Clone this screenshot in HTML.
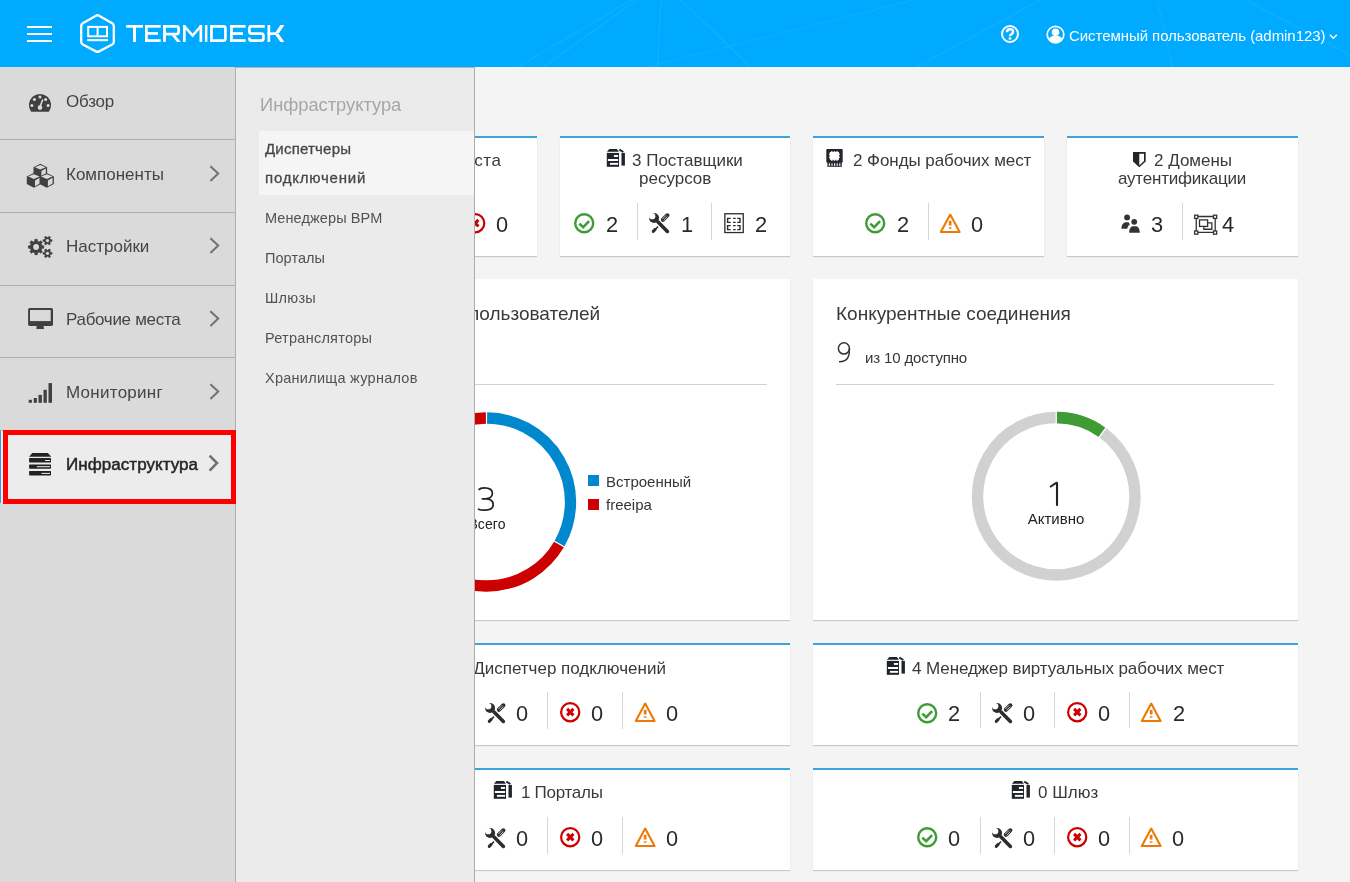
<!DOCTYPE html>
<html><head><meta charset="utf-8"><title>Termidesk</title>
<style>
html,body{margin:0;padding:0;}
body{width:1350px;height:882px;position:relative;overflow:hidden;background:#f4f4f4;font-family:"Liberation Sans", sans-serif;}
.t{position:absolute;white-space:nowrap;will-change:transform;}
.r{position:absolute;}
.s{position:absolute;overflow:visible;}
</style></head><body>
<div class="r" style="left:307px;top:136px;width:230px;height:2px;background:#39a5dc;"></div><div class="r" style="left:307px;top:138px;width:230px;height:118px;background:#fff;box-shadow:0 1px 1px rgba(3,3,3,0.18);"></div><div class="r" style="left:560px;top:136px;width:230px;height:2px;background:#39a5dc;"></div><div class="r" style="left:560px;top:138px;width:230px;height:118px;background:#fff;box-shadow:0 1px 1px rgba(3,3,3,0.18);"></div><div class="r" style="left:813px;top:136px;width:231px;height:2px;background:#39a5dc;"></div><div class="r" style="left:813px;top:138px;width:231px;height:118px;background:#fff;box-shadow:0 1px 1px rgba(3,3,3,0.18);"></div><div class="r" style="left:1067px;top:136px;width:231px;height:2px;background:#39a5dc;"></div><div class="r" style="left:1067px;top:138px;width:231px;height:118px;background:#fff;box-shadow:0 1px 1px rgba(3,3,3,0.18);"></div><div class="t" style="left:375px;top:151.61px;font-size:17px;line-height:17px;color:#3a3a3a;font-weight:400;letter-spacing:0.65px;">Рабочие места</div><svg class="s" style="left:465.2px;top:212.9px;" width="21" height="21" viewBox="0 0 21 21"><circle cx="10.2" cy="10.2" r="9.1" fill="none" stroke="#cc0000" stroke-width="2.2"/><path d="M7.1 6.9 L13.4 13.4 M13.4 6.9 L7.1 13.4" stroke="#cc0000" stroke-width="3"/></svg><div class="t" style="left:496.2px;top:213.54px;font-size:21.8px;line-height:21.8px;color:#292929;font-weight:400;">0</div><svg class="s" style="left:603px;top:146px;" width="25" height="24" viewBox="0 0 25 24"><path d="M6.3 2.9 H13.9 L15.9 5.85 H3.9 Z" fill="#1f232a"/><rect x="3.8" y="6.9" width="12.2" height="13.9" fill="#1f232a"/><rect x="10.9" y="9" width="4.2" height="1.9" fill="#fff"/><rect x="4.9" y="13" width="10.2" height="2" fill="#fff"/><rect x="6.9" y="16.9" width="8.2" height="1.9" fill="#fff"/><rect x="18.5" y="6.9" width="3.4" height="12.7" fill="#1f232a"/><path d="M16.3 3.6 L20.4 6" stroke="#1f232a" stroke-width="1.9"/></svg><div class="t" style="left:632.3px;top:151.81px;font-size:17px;line-height:17px;color:#3a3a3a;font-weight:400;">3 Поставщики</div><div class="t" style="left:639.2px;top:170.11px;font-size:17px;line-height:17px;color:#3a3a3a;font-weight:400;">ресурсов</div><svg class="s" style="left:574.2px;top:212.9px;" width="21" height="21" viewBox="0 0 21 21"><circle cx="10.2" cy="10.2" r="9.0" fill="none" stroke="#3f9c35" stroke-width="2.4"/><path d="M5.3 10.6 L9.2 14.2 L15.1 8.2" fill="none" stroke="#3f9c35" stroke-width="2.6"/></svg><div class="t" style="left:605.5px;top:213.54px;font-size:21.8px;line-height:21.8px;color:#292929;font-weight:400;">2</div><div class="r" style="left:637px;top:203px;width:1px;height:37px;background:#d6d6d6;"></div><svg class="s" style="left:646px;top:210px;" width="26" height="26" viewBox="0 0 26 26"><path d="M11.8 11.8 L21.4 21.4" stroke="#2d2d2d" stroke-width="3.6" stroke-linecap="round"/><circle cx="8.05" cy="8" r="5" fill="#2d2d2d"/><circle cx="6.2" cy="6.2" r="3.15" fill="#fff"/><path d="M16.9 9.8 L21.4 5.3" stroke="#2d2d2d" stroke-width="4.1" stroke-linecap="round"/><path d="M16.3 9.1 L20.1 5.3 M17.6 10.4 L21.4 6.6" stroke="#fff" stroke-width="0.7"/><path d="M12 16.6 L9.4 19.2" stroke="#2d2d2d" stroke-width="1.5"/><path d="M9.2 19.4 L7.2 21.4" stroke="#2d2d2d" stroke-width="2.9" stroke-linecap="round"/></svg><div class="t" style="left:681px;top:213.54px;font-size:21.8px;line-height:21.8px;color:#292929;font-weight:400;">1</div><div class="r" style="left:711px;top:203px;width:1px;height:37px;background:#d6d6d6;"></div><svg class="s" style="left:721px;top:210px;" width="26" height="26" viewBox="0 0 26 26"><rect x="3.85" y="3.75" width="18.4" height="18.8" fill="none" stroke="#2d2d2d" stroke-width="1.3"/><path d="M9.7 8.4 H6.6 V12.4 H9.7 M12.1 8.4 H14.7 M12.1 12.4 H14.7 M16.2 8.4 H19 V12.4 H16.2" fill="none" stroke="#2d2d2d" stroke-width="1.4"/><path d="M9.7 15.6 H6.6 V19.6 H9.7 M12.1 15.6 H14.7 M12.1 19.6 H14.7 M16.2 15.6 H19 V19.6 H16.2" fill="none" stroke="#2d2d2d" stroke-width="1.4"/></svg><div class="t" style="left:754.5px;top:213.54px;font-size:21.8px;line-height:21.8px;color:#292929;font-weight:400;">2</div><svg class="s" style="left:823px;top:146px;" width="24" height="24" viewBox="0 0 24 24"><rect x="3.3" y="2.9" width="16.4" height="13.8" rx="1" fill="#22262d"/><rect x="4.4" y="16.2" width="14.4" height="4.6" fill="#22262d"/><rect x="5.8" y="17.4" width="1.2" height="2.4" fill="#fff"/><rect x="8.4" y="17.4" width="1.2" height="2.4" fill="#fff"/><rect x="11.0" y="17.4" width="1.2" height="2.4" fill="#fff"/><rect x="13.6" y="17.4" width="1.2" height="2.4" fill="#fff"/><rect x="16.2" y="17.4" width="1.2" height="2.4" fill="#fff"/><path d="M6.8 6 H8 V5.3 H9.6 V6 H10.6 V5.3 H12.2 V6 H13.2 V5.3 H14.8 V6 H16 V7.6 H16.7 V9.2 H16 V10.4 H16.7 V12 H16 V13.8 H14.8 V14.8 H13.2 V13.8 H12.2 V14.8 H10.6 V13.8 H9.6 V14.8 H8 V13.8 H6.8 V12 H6.1 V10.4 H6.8 V9.2 H6.1 V7.6 H6.8 Z" fill="#fff"/></svg><div class="t" style="left:853.3px;top:151.61px;font-size:17px;line-height:17px;color:#3a3a3a;font-weight:400;letter-spacing:-0.06px;">2 Фонды рабочих мест</div><svg class="s" style="left:865.3px;top:213.2px;" width="21" height="21" viewBox="0 0 21 21"><circle cx="10.2" cy="10.2" r="9.0" fill="none" stroke="#3f9c35" stroke-width="2.4"/><path d="M5.3 10.6 L9.2 14.2 L15.1 8.2" fill="none" stroke="#3f9c35" stroke-width="2.6"/></svg><div class="t" style="left:896.8px;top:213.54px;font-size:21.8px;line-height:21.8px;color:#292929;font-weight:400;">2</div><div class="r" style="left:928px;top:203px;width:1px;height:37px;background:#d6d6d6;"></div><svg class="s" style="left:940px;top:212.5px;" width="21" height="21" viewBox="0 0 21 21"><path d="M10.2 1.6 L19.6 19 L0.8 19 Z" fill="none" stroke="#ec7a08" stroke-width="2.1" stroke-linejoin="round"/><rect x="8.8" y="7.8" width="2.7" height="4.7" fill="#ec7a08"/><rect x="8.8" y="14.3" width="2.7" height="1.4" fill="#ec7a08"/></svg><div class="t" style="left:970.8px;top:213.54px;font-size:21.8px;line-height:21.8px;color:#292929;font-weight:400;">0</div><svg class="s" style="left:1129px;top:149px;" width="21" height="21" viewBox="0 0 21 21"><path d="M4 3.1 H16.7 V12.4 L10.3 18.3 L4 12.4 Z" fill="#22262d"/><path d="M10.3 4.8 H15 V12 L10.3 16.4 Z" fill="#fff"/></svg><div class="t" style="left:1153.8px;top:151.61px;font-size:17px;line-height:17px;color:#3a3a3a;font-weight:400;">2 Домены</div><div class="t" style="left:1118.3px;top:170.11px;font-size:17px;line-height:17px;color:#3a3a3a;font-weight:400;letter-spacing:-0.21px;">аутентификации</div><svg class="s" style="left:1118px;top:211px;" width="25" height="25" viewBox="0 0 25 25"><circle cx="9.1" cy="6.4" r="2.9" fill="#333"/><circle cx="16.2" cy="10.8" r="2.9" fill="#333"/><path d="M3.4 17.7 C3.6 13.5 5.4 11.2 8.2 11.2 H10.6 L11.9 13.2 C10.4 14.3 9.6 15.8 9.2 17.7 Z" fill="#333"/><path d="M11.1 21.8 C11.2 17.6 12.8 15.2 15.2 15.2 H17.6 C20.2 15.2 21.7 17.6 21.8 21.8 Z" fill="#333"/></svg><div class="t" style="left:1150.6px;top:213.54px;font-size:21.8px;line-height:21.8px;color:#292929;font-weight:400;">3</div><div class="r" style="left:1182px;top:203px;width:1px;height:37px;background:#d6d6d6;"></div><svg class="s" style="left:1192px;top:212px;" width="28" height="25" viewBox="0 0 28 25"><path d="M4.25 6.5 V19 M23.2 6.5 V19 M6 4.5 H21.4 M6 20.4 H21.4" stroke="#333" stroke-width="1.3"/><rect x="7.5" y="7.9" width="8.1" height="6.5" fill="none" stroke="#333" stroke-width="1.3"/><path d="M15.6 10.85 H19.85 V17.25 H11.85 V14.4" fill="none" stroke="#333" stroke-width="1.3"/><rect x="2.6" y="3.2" width="3.2" height="3.2" fill="#fff" stroke="#333" stroke-width="1.3"/><rect x="21.5" y="3.2" width="3.2" height="3.2" fill="#fff" stroke="#333" stroke-width="1.3"/><rect x="2.6" y="19.0" width="3.2" height="3.2" fill="#fff" stroke="#333" stroke-width="1.3"/><rect x="21.5" y="19.0" width="3.2" height="3.2" fill="#fff" stroke="#333" stroke-width="1.3"/></svg><div class="t" style="left:1221.8px;top:213.54px;font-size:21.8px;line-height:21.8px;color:#292929;font-weight:400;">4</div><div class="r" style="left:307px;top:279px;width:483px;height:341px;background:#fff;box-shadow:0 1px 1px rgba(3,3,3,0.18);"></div><div class="r" style="left:813px;top:279px;width:485px;height:341px;background:#fff;box-shadow:0 1px 1px rgba(3,3,3,0.18);"></div><div class="t" style="left:372px;top:303.91px;font-size:19px;line-height:19px;color:#3a3a3a;font-weight:400;">Источники пользователей</div><div class="r" style="left:330px;top:384px;width:437px;height:1px;background:#d1d1d1;"></div><div class="t" style="left:836px;top:303.91px;font-size:19px;line-height:19px;color:#3a3a3a;font-weight:400;">Конкурентные соединения</div><svg class="s" style="left:832px;top:338px;" width="26" height="30" viewBox="0 0 26 30"><ellipse cx="11.9" cy="10.4" rx="5.55" ry="5.6" fill="none" stroke="#333" stroke-width="1.5"/><path d="M17.45 10.4 C17.5 13.5 17.4 16.6 16 19.4 C14.5 22.4 11.6 23.7 7 23.8" fill="none" stroke="#333" stroke-width="1.5"/></svg><div class="t" style="left:864.6px;top:349.90px;font-size:15px;line-height:15px;color:#363636;font-weight:400;letter-spacing:-0.15px;">из 10 доступно</div><div class="r" style="left:836px;top:384px;width:438px;height:1px;background:#d1d1d1;"></div><svg class="s" style="left:380px;top:400px;" width="220" height="210" viewBox="0 0 220 210"><path d="M107.09 18.00 A84.0 84.0 0 0 1 179.54 143.49" fill="none" stroke="#0088ce" stroke-width="11.3"/><path d="M178.95 144.51 A84.0 84.0 0 1 1 105.91 18.00" fill="none" stroke="#cc0000" stroke-width="11.3"/></svg><svg class="s" style="left:470px;top:482px;" width="30" height="34" viewBox="0 0 30 34"><path d="M8.6 7.9 C9.9 6.3 11.7 5.9 14.2 5.9 C18.6 5.9 22.4 7.6 22.4 11.3 C22.4 14.6 19.6 16.8 15.4 16.8 H11.7 M15.4 16.8 C20.6 16.8 23.2 19.2 23.2 22.6 C23.2 26.6 19.8 28.2 14.6 28.2 C11.8 28.2 9.6 27.8 7.9 26.9" fill="none" stroke="#222" stroke-width="1.7"/></svg><div class="t" style="left:447.30px;width:80px;text-align:center;top:517.45px;font-size:14px;line-height:14px;color:#222;font-weight:400;letter-spacing:0.1px;">Всего</div><div class="r" style="left:588px;top:475px;width:11px;height:11px;background:#0088ce;"></div><div class="t" style="left:606.2px;top:473.50px;font-size:15px;line-height:15px;color:#363636;font-weight:400;">Встроенный</div><div class="r" style="left:588px;top:499px;width:11px;height:11px;background:#cc0000;"></div><div class="t" style="left:606.2px;top:497.30px;font-size:15px;line-height:15px;color:#363636;font-weight:400;">freeipa</div><svg class="s" style="left:960px;top:400px;" width="200" height="200" viewBox="0 0 200 200"><path d="M96.25 17.55 A78.7 78.7 0 1 1 96.24 17.55" fill="none" stroke="#d1d1d1" stroke-width="11.4"/><path d="M96.80 17.55 A78.7 78.7 0 0 1 142.06 32.26" fill="none" stroke="#3f9c35" stroke-width="11.4"/><path d="M96.25 11 V23 M135.93 41.64 L149.15 23.44" stroke="#fff" stroke-width="1.2"/></svg><svg class="s" style="left:1040px;top:478px;" width="30" height="30" viewBox="0 0 30 30"><path d="M17 4.3 V27.8" stroke="#222" stroke-width="2.1"/><path d="M10 9 L17 4.4" stroke="#222" stroke-width="1.9"/></svg><div class="t" style="left:1006.00px;width:100px;text-align:center;top:510.60px;font-size:15px;line-height:15px;color:#222;font-weight:400;">Активно</div><div class="r" style="left:307px;top:643px;width:483px;height:2px;background:#39a5dc;"></div><div class="r" style="left:307px;top:645px;width:483px;height:100px;background:#fff;box-shadow:0 1px 1px rgba(3,3,3,0.18);"></div><div class="r" style="left:813px;top:643px;width:485px;height:2px;background:#39a5dc;"></div><div class="r" style="left:813px;top:645px;width:485px;height:100px;background:#fff;box-shadow:0 1px 1px rgba(3,3,3,0.18);"></div><svg class="s" style="left:430px;top:654.2px;" width="25" height="24" viewBox="0 0 25 24"><path d="M6.3 2.9 H13.9 L15.9 5.85 H3.9 Z" fill="#1f232a"/><rect x="3.8" y="6.9" width="12.2" height="13.9" fill="#1f232a"/><rect x="10.9" y="9" width="4.2" height="1.9" fill="#fff"/><rect x="4.9" y="13" width="10.2" height="2" fill="#fff"/><rect x="6.9" y="16.9" width="8.2" height="1.9" fill="#fff"/><rect x="18.5" y="6.9" width="3.4" height="12.7" fill="#1f232a"/><path d="M16.3 3.6 L20.4 6" stroke="#1f232a" stroke-width="1.9"/></svg><div class="t" style="left:459px;top:659.61px;font-size:17px;line-height:17px;color:#3a3a3a;font-weight:400;">1 Диспетчер подключений</div><svg class="s" style="left:411px;top:702.3px;" width="21" height="21" viewBox="0 0 21 21"><circle cx="10.2" cy="10.2" r="9.0" fill="none" stroke="#3f9c35" stroke-width="2.4"/><path d="M5.3 10.6 L9.2 14.2 L15.1 8.2" fill="none" stroke="#3f9c35" stroke-width="2.6"/></svg><div class="t" style="left:442px;top:703.04px;font-size:21.8px;line-height:21.8px;color:#292929;font-weight:400;">0</div><div class="r" style="left:473px;top:692px;width:1px;height:37px;background:#d6d6d6;"></div><svg class="s" style="left:482px;top:699.5px;" width="26" height="26" viewBox="0 0 26 26"><path d="M11.8 11.8 L21.4 21.4" stroke="#2d2d2d" stroke-width="3.6" stroke-linecap="round"/><circle cx="8.05" cy="8" r="5" fill="#2d2d2d"/><circle cx="6.2" cy="6.2" r="3.15" fill="#fff"/><path d="M16.9 9.8 L21.4 5.3" stroke="#2d2d2d" stroke-width="4.1" stroke-linecap="round"/><path d="M16.3 9.1 L20.1 5.3 M17.6 10.4 L21.4 6.6" stroke="#fff" stroke-width="0.7"/><path d="M12 16.6 L9.4 19.2" stroke="#2d2d2d" stroke-width="1.5"/><path d="M9.2 19.4 L7.2 21.4" stroke="#2d2d2d" stroke-width="2.9" stroke-linecap="round"/></svg><div class="t" style="left:515.8px;top:703.04px;font-size:21.8px;line-height:21.8px;color:#292929;font-weight:400;">0</div><div class="r" style="left:547px;top:692px;width:1px;height:37px;background:#d6d6d6;"></div><svg class="s" style="left:559.5px;top:702px;" width="21" height="21" viewBox="0 0 21 21"><circle cx="10.2" cy="10.2" r="9.1" fill="none" stroke="#cc0000" stroke-width="2.2"/><path d="M7.1 6.9 L13.4 13.4 M13.4 6.9 L7.1 13.4" stroke="#cc0000" stroke-width="3"/></svg><div class="t" style="left:590.7px;top:703.04px;font-size:21.8px;line-height:21.8px;color:#292929;font-weight:400;">0</div><div class="r" style="left:622px;top:692px;width:1px;height:37px;background:#d6d6d6;"></div><svg class="s" style="left:634.5px;top:701.5px;" width="21" height="21" viewBox="0 0 21 21"><path d="M10.2 1.6 L19.6 19 L0.8 19 Z" fill="none" stroke="#ec7a08" stroke-width="2.1" stroke-linejoin="round"/><rect x="8.8" y="7.8" width="2.7" height="4.7" fill="#ec7a08"/><rect x="8.8" y="14.3" width="2.7" height="1.4" fill="#ec7a08"/></svg><div class="t" style="left:665.7px;top:703.04px;font-size:21.8px;line-height:21.8px;color:#292929;font-weight:400;">0</div><svg class="s" style="left:883.1px;top:654.2px;" width="25" height="24" viewBox="0 0 25 24"><path d="M6.3 2.9 H13.9 L15.9 5.85 H3.9 Z" fill="#1f232a"/><rect x="3.8" y="6.9" width="12.2" height="13.9" fill="#1f232a"/><rect x="10.9" y="9" width="4.2" height="1.9" fill="#fff"/><rect x="4.9" y="13" width="10.2" height="2" fill="#fff"/><rect x="6.9" y="16.9" width="8.2" height="1.9" fill="#fff"/><rect x="18.5" y="6.9" width="3.4" height="12.7" fill="#1f232a"/><path d="M16.3 3.6 L20.4 6" stroke="#1f232a" stroke-width="1.9"/></svg><div class="t" style="left:911.8px;top:659.91px;font-size:17px;line-height:17px;color:#3a3a3a;font-weight:400;letter-spacing:-0.08px;">4 Менеджер виртуальных рабочих мест</div><svg class="s" style="left:917.4px;top:702.5px;" width="21" height="21" viewBox="0 0 21 21"><circle cx="10.2" cy="10.2" r="9.0" fill="none" stroke="#3f9c35" stroke-width="2.4"/><path d="M5.3 10.6 L9.2 14.2 L15.1 8.2" fill="none" stroke="#3f9c35" stroke-width="2.6"/></svg><div class="t" style="left:947.8px;top:703.04px;font-size:21.8px;line-height:21.8px;color:#292929;font-weight:400;">2</div><div class="r" style="left:980px;top:692px;width:1px;height:36px;background:#d6d6d6;"></div><svg class="s" style="left:989px;top:699.5px;" width="26" height="26" viewBox="0 0 26 26"><path d="M11.8 11.8 L21.4 21.4" stroke="#2d2d2d" stroke-width="3.6" stroke-linecap="round"/><circle cx="8.05" cy="8" r="5" fill="#2d2d2d"/><circle cx="6.2" cy="6.2" r="3.15" fill="#fff"/><path d="M16.9 9.8 L21.4 5.3" stroke="#2d2d2d" stroke-width="4.1" stroke-linecap="round"/><path d="M16.3 9.1 L20.1 5.3 M17.6 10.4 L21.4 6.6" stroke="#fff" stroke-width="0.7"/><path d="M12 16.6 L9.4 19.2" stroke="#2d2d2d" stroke-width="1.5"/><path d="M9.2 19.4 L7.2 21.4" stroke="#2d2d2d" stroke-width="2.9" stroke-linecap="round"/></svg><div class="t" style="left:1023px;top:703.04px;font-size:21.8px;line-height:21.8px;color:#292929;font-weight:400;">0</div><div class="r" style="left:1054px;top:692px;width:1px;height:36px;background:#d6d6d6;"></div><svg class="s" style="left:1066.5px;top:702px;" width="21" height="21" viewBox="0 0 21 21"><circle cx="10.2" cy="10.2" r="9.1" fill="none" stroke="#cc0000" stroke-width="2.2"/><path d="M7.1 6.9 L13.4 13.4 M13.4 6.9 L7.1 13.4" stroke="#cc0000" stroke-width="3"/></svg><div class="t" style="left:1098.1px;top:703.04px;font-size:21.8px;line-height:21.8px;color:#292929;font-weight:400;">0</div><div class="r" style="left:1129px;top:692px;width:1px;height:36px;background:#d6d6d6;"></div><svg class="s" style="left:1141px;top:701.5px;" width="21" height="21" viewBox="0 0 21 21"><path d="M10.2 1.6 L19.6 19 L0.8 19 Z" fill="none" stroke="#ec7a08" stroke-width="2.1" stroke-linejoin="round"/><rect x="8.8" y="7.8" width="2.7" height="4.7" fill="#ec7a08"/><rect x="8.8" y="14.3" width="2.7" height="1.4" fill="#ec7a08"/></svg><div class="t" style="left:1172.6px;top:703.04px;font-size:21.8px;line-height:21.8px;color:#292929;font-weight:400;">2</div><div class="r" style="left:307px;top:768px;width:483px;height:2px;background:#39a5dc;"></div><div class="r" style="left:307px;top:770px;width:483px;height:100px;background:#fff;box-shadow:0 1px 1px rgba(3,3,3,0.18);"></div><div class="r" style="left:813px;top:768px;width:485px;height:2px;background:#39a5dc;"></div><div class="r" style="left:813px;top:770px;width:485px;height:100px;background:#fff;box-shadow:0 1px 1px rgba(3,3,3,0.18);"></div><svg class="s" style="left:490.4px;top:778.4px;" width="25" height="24" viewBox="0 0 25 24"><path d="M6.3 2.9 H13.9 L15.9 5.85 H3.9 Z" fill="#1f232a"/><rect x="3.8" y="6.9" width="12.2" height="13.9" fill="#1f232a"/><rect x="10.9" y="9" width="4.2" height="1.9" fill="#fff"/><rect x="4.9" y="13" width="10.2" height="2" fill="#fff"/><rect x="6.9" y="16.9" width="8.2" height="1.9" fill="#fff"/><rect x="18.5" y="6.9" width="3.4" height="12.7" fill="#1f232a"/><path d="M16.3 3.6 L20.4 6" stroke="#1f232a" stroke-width="1.9"/></svg><div class="t" style="left:521px;top:784.21px;font-size:17px;line-height:17px;color:#3a3a3a;font-weight:400;letter-spacing:-0.28px;">1 Порталы</div><svg class="s" style="left:411px;top:827.3px;" width="21" height="21" viewBox="0 0 21 21"><circle cx="10.2" cy="10.2" r="9.0" fill="none" stroke="#3f9c35" stroke-width="2.4"/><path d="M5.3 10.6 L9.2 14.2 L15.1 8.2" fill="none" stroke="#3f9c35" stroke-width="2.6"/></svg><div class="t" style="left:442px;top:828.04px;font-size:21.8px;line-height:21.8px;color:#292929;font-weight:400;">0</div><div class="r" style="left:473px;top:817px;width:1px;height:37px;background:#d6d6d6;"></div><svg class="s" style="left:482px;top:824.8px;" width="26" height="26" viewBox="0 0 26 26"><path d="M11.8 11.8 L21.4 21.4" stroke="#2d2d2d" stroke-width="3.6" stroke-linecap="round"/><circle cx="8.05" cy="8" r="5" fill="#2d2d2d"/><circle cx="6.2" cy="6.2" r="3.15" fill="#fff"/><path d="M16.9 9.8 L21.4 5.3" stroke="#2d2d2d" stroke-width="4.1" stroke-linecap="round"/><path d="M16.3 9.1 L20.1 5.3 M17.6 10.4 L21.4 6.6" stroke="#fff" stroke-width="0.7"/><path d="M12 16.6 L9.4 19.2" stroke="#2d2d2d" stroke-width="1.5"/><path d="M9.2 19.4 L7.2 21.4" stroke="#2d2d2d" stroke-width="2.9" stroke-linecap="round"/></svg><div class="t" style="left:515.8px;top:828.04px;font-size:21.8px;line-height:21.8px;color:#292929;font-weight:400;">0</div><div class="r" style="left:547px;top:817px;width:1px;height:37px;background:#d6d6d6;"></div><svg class="s" style="left:559.5px;top:827px;" width="21" height="21" viewBox="0 0 21 21"><circle cx="10.2" cy="10.2" r="9.1" fill="none" stroke="#cc0000" stroke-width="2.2"/><path d="M7.1 6.9 L13.4 13.4 M13.4 6.9 L7.1 13.4" stroke="#cc0000" stroke-width="3"/></svg><div class="t" style="left:590.7px;top:828.04px;font-size:21.8px;line-height:21.8px;color:#292929;font-weight:400;">0</div><div class="r" style="left:622px;top:817px;width:1px;height:37px;background:#d6d6d6;"></div><svg class="s" style="left:634.5px;top:826.5px;" width="21" height="21" viewBox="0 0 21 21"><path d="M10.2 1.6 L19.6 19 L0.8 19 Z" fill="none" stroke="#ec7a08" stroke-width="2.1" stroke-linejoin="round"/><rect x="8.8" y="7.8" width="2.7" height="4.7" fill="#ec7a08"/><rect x="8.8" y="14.3" width="2.7" height="1.4" fill="#ec7a08"/></svg><div class="t" style="left:665.7px;top:828.04px;font-size:21.8px;line-height:21.8px;color:#292929;font-weight:400;">0</div><svg class="s" style="left:1008.4px;top:778px;" width="25" height="24" viewBox="0 0 25 24"><path d="M6.3 2.9 H13.9 L15.9 5.85 H3.9 Z" fill="#1f232a"/><rect x="3.8" y="6.9" width="12.2" height="13.9" fill="#1f232a"/><rect x="10.9" y="9" width="4.2" height="1.9" fill="#fff"/><rect x="4.9" y="13" width="10.2" height="2" fill="#fff"/><rect x="6.9" y="16.9" width="8.2" height="1.9" fill="#fff"/><rect x="18.5" y="6.9" width="3.4" height="12.7" fill="#1f232a"/><path d="M16.3 3.6 L20.4 6" stroke="#1f232a" stroke-width="1.9"/></svg><div class="t" style="left:1037.5px;top:784.41px;font-size:17px;line-height:17px;color:#3a3a3a;font-weight:400;">0 Шлюз</div><svg class="s" style="left:917.3px;top:827.3px;" width="21" height="21" viewBox="0 0 21 21"><circle cx="10.2" cy="10.2" r="9.0" fill="none" stroke="#3f9c35" stroke-width="2.4"/><path d="M5.3 10.6 L9.2 14.2 L15.1 8.2" fill="none" stroke="#3f9c35" stroke-width="2.6"/></svg><div class="t" style="left:948.4px;top:828.04px;font-size:21.8px;line-height:21.8px;color:#292929;font-weight:400;">0</div><div class="r" style="left:980px;top:817px;width:1px;height:37px;background:#d6d6d6;"></div><svg class="s" style="left:989px;top:824.8px;" width="26" height="26" viewBox="0 0 26 26"><path d="M11.8 11.8 L21.4 21.4" stroke="#2d2d2d" stroke-width="3.6" stroke-linecap="round"/><circle cx="8.05" cy="8" r="5" fill="#2d2d2d"/><circle cx="6.2" cy="6.2" r="3.15" fill="#fff"/><path d="M16.9 9.8 L21.4 5.3" stroke="#2d2d2d" stroke-width="4.1" stroke-linecap="round"/><path d="M16.3 9.1 L20.1 5.3 M17.6 10.4 L21.4 6.6" stroke="#fff" stroke-width="0.7"/><path d="M12 16.6 L9.4 19.2" stroke="#2d2d2d" stroke-width="1.5"/><path d="M9.2 19.4 L7.2 21.4" stroke="#2d2d2d" stroke-width="2.9" stroke-linecap="round"/></svg><div class="t" style="left:1023.1px;top:828.04px;font-size:21.8px;line-height:21.8px;color:#292929;font-weight:400;">0</div><div class="r" style="left:1054px;top:817px;width:1px;height:37px;background:#d6d6d6;"></div><svg class="s" style="left:1066.5px;top:827px;" width="21" height="21" viewBox="0 0 21 21"><circle cx="10.2" cy="10.2" r="9.1" fill="none" stroke="#cc0000" stroke-width="2.2"/><path d="M7.1 6.9 L13.4 13.4 M13.4 6.9 L7.1 13.4" stroke="#cc0000" stroke-width="3"/></svg><div class="t" style="left:1097.5px;top:828.04px;font-size:21.8px;line-height:21.8px;color:#292929;font-weight:400;">0</div><div class="r" style="left:1129px;top:817px;width:1px;height:37px;background:#d6d6d6;"></div><svg class="s" style="left:1141px;top:826.5px;" width="21" height="21" viewBox="0 0 21 21"><path d="M10.2 1.6 L19.6 19 L0.8 19 Z" fill="none" stroke="#ec7a08" stroke-width="2.1" stroke-linejoin="round"/><rect x="8.8" y="7.8" width="2.7" height="4.7" fill="#ec7a08"/><rect x="8.8" y="14.3" width="2.7" height="1.4" fill="#ec7a08"/></svg><div class="t" style="left:1172.4px;top:828.04px;font-size:21.8px;line-height:21.8px;color:#292929;font-weight:400;">0</div>
<div class="r" style="left:236px;top:67px;width:238px;height:815px;background:#ebebeb;"></div><div class="r" style="left:474px;top:67px;width:1px;height:815px;background:#adadad;"></div><div class="r" style="left:236px;top:67px;width:239px;height:1px;background:#b4b4b4;"></div><div class="t" style="left:259.5px;top:95.51px;font-size:18.3px;line-height:18.3px;color:#a6a6a6;font-weight:400;">Инфраструктура</div><div class="r" style="left:259px;top:131px;width:215px;height:64px;background:#f5f5f5;"></div><div class="t" style="left:264.8px;top:141.30px;font-size:15px;line-height:15px;color:#474747;font-weight:400;letter-spacing:0.2px;-webkit-text-stroke:0.3px #474747;">Диспетчеры</div><div class="t" style="left:264.8px;top:170.30px;font-size:15px;line-height:15px;color:#474747;font-weight:400;letter-spacing:0.78px;-webkit-text-stroke:0.3px #474747;">подключений</div><div class="t" style="left:264.6px;top:211.02px;font-size:14.5px;line-height:14.5px;color:#525252;font-weight:400;letter-spacing:0.1px;">Менеджеры ВРМ</div><div class="t" style="left:264.6px;top:251.02px;font-size:14.5px;line-height:14.5px;color:#525252;font-weight:400;letter-spacing:0.05px;">Порталы</div><div class="t" style="left:264.6px;top:291.02px;font-size:14.5px;line-height:14.5px;color:#525252;font-weight:400;letter-spacing:0.25px;">Шлюзы</div><div class="t" style="left:264.6px;top:331.02px;font-size:14.5px;line-height:14.5px;color:#525252;font-weight:400;letter-spacing:0.25px;">Ретрансляторы</div><div class="t" style="left:264.6px;top:371.02px;font-size:14.5px;line-height:14.5px;color:#525252;font-weight:400;letter-spacing:0.26px;">Хранилища журналов</div>
<div class="r" style="left:0px;top:67px;width:235px;height:815px;background:#dadada;"></div><div class="r" style="left:235px;top:67px;width:1px;height:815px;background:#b0b0b0;"></div><div class="r" style="left:0px;top:139px;width:235px;height:1px;background:#adadad;"></div><div class="r" style="left:0px;top:212px;width:235px;height:1px;background:#adadad;"></div><div class="r" style="left:0px;top:285px;width:235px;height:1px;background:#adadad;"></div><div class="r" style="left:0px;top:357px;width:235px;height:1px;background:#adadad;"></div><div class="r" style="left:0px;top:430px;width:235px;height:1px;background:#adadad;"></div><div class="r" style="left:0px;top:431px;width:235px;height:72px;background:#ececec;"></div><div class="r" style="left:0px;top:431px;width:1px;height:72px;background:#2a9fdb;"></div><div class="t" style="left:65.5px;top:92.61px;font-size:17px;line-height:17px;color:#454545;font-weight:400;letter-spacing:-0.2px;">Обзор</div><div class="t" style="left:65.5px;top:165.61px;font-size:17px;line-height:17px;color:#454545;font-weight:400;letter-spacing:0px;">Компоненты</div><svg class="s" style="left:205px;top:160px;" width="20" height="24" viewBox="0 0 20 24"><path d="M5.4 6.3 L13.2 13.6 L5.4 20.9" fill="none" stroke="#6e7277" stroke-width="2"/></svg><div class="t" style="left:65.5px;top:237.61px;font-size:17px;line-height:17px;color:#454545;font-weight:400;letter-spacing:0px;">Настройки</div><svg class="s" style="left:205px;top:232px;" width="20" height="24" viewBox="0 0 20 24"><path d="M5.4 6.3 L13.2 13.6 L5.4 20.9" fill="none" stroke="#6e7277" stroke-width="2"/></svg><div class="t" style="left:65.5px;top:310.61px;font-size:17px;line-height:17px;color:#454545;font-weight:400;letter-spacing:-0.3px;">Рабочие места</div><svg class="s" style="left:205px;top:305px;" width="20" height="24" viewBox="0 0 20 24"><path d="M5.4 6.3 L13.2 13.6 L5.4 20.9" fill="none" stroke="#6e7277" stroke-width="2"/></svg><div class="t" style="left:65.5px;top:383.61px;font-size:17px;line-height:17px;color:#454545;font-weight:400;letter-spacing:0.27px;">Мониторинг</div><svg class="s" style="left:205px;top:378px;" width="20" height="24" viewBox="0 0 20 24"><path d="M5.4 6.3 L13.2 13.6 L5.4 20.9" fill="none" stroke="#6e7277" stroke-width="2"/></svg><div class="t" style="left:65.5px;top:455.61px;font-size:17px;line-height:17px;color:#262626;font-weight:400;letter-spacing:0.05px;-webkit-text-stroke:0.5px #262626;">Инфраструктура</div><svg class="s" style="left:204px;top:450px;" width="20" height="24" viewBox="0 0 20 24"><path d="M5.6 5.6 L13 13.1 L5.6 20.6" fill="none" stroke="#6e7277" stroke-width="2.6"/></svg><svg class="s" style="left:26px;top:90px;" width="28" height="24" viewBox="0 0 28 24"><path d="M5.15 21.7 A11.1 11.1 0 1 1 22.85 21.7 Z" fill="#404040"/><circle cx="5.9" cy="15.4" r="1.5" fill="#dadada"/><circle cx="8.4" cy="9.6" r="1.5" fill="#dadada"/><circle cx="14" cy="6.9" r="1.5" fill="#dadada"/><circle cx="19.6" cy="9.6" r="1.5" fill="#dadada"/><circle cx="22.1" cy="15.4" r="1.5" fill="#dadada"/><circle cx="14" cy="17.6" r="2.3" fill="#dadada"/><path d="M13.9 17 L16.6 10" stroke="#dadada" stroke-width="1.6" stroke-linecap="round"/></svg><svg class="s" style="left:24px;top:160px;" width="33" height="30" viewBox="0 0 33 30"><path d="M16.3 3.7 L23.1 7.236000000000001 L23.1 14.376000000000001 L16.3 17.912 L9.5 14.376000000000001 L9.5 7.236000000000001 Z" fill="#404040"/><path d="M16.3 5.1 L21.700000000000003 7.236000000000001 L16.3 9.572000000000001 L10.9 7.236000000000001 Z" fill="#dadada"/><path d="M17.400000000000002 11.072000000000001 L21.8 8.436 L21.8 13.776000000000002 L17.400000000000002 16.311999999999998 Z" fill="#dadada"/><path d="M9.9 12.9 L17.0 16.592 L17.0 24.046999999999997 L9.9 27.738999999999997 L2.8000000000000007 24.046999999999997 L2.8000000000000007 16.592 Z" fill="#404040"/><path d="M9.9 14.3 L15.6 16.592 L9.9 19.084 L4.200000000000001 16.592 Z" fill="#dadada"/><path d="M11.0 20.584 L15.7 17.791999999999998 L15.7 23.446999999999996 L11.0 26.138999999999996 Z" fill="#dadada"/><path d="M22.8 12.9 L29.9 16.592 L29.9 24.046999999999997 L22.8 27.738999999999997 L15.700000000000001 24.046999999999997 L15.700000000000001 16.592 Z" fill="#404040"/><path d="M22.8 14.3 L28.5 16.592 L22.8 19.084 L17.1 16.592 Z" fill="#dadada"/><path d="M23.900000000000002 20.584 L28.599999999999998 17.791999999999998 L28.599999999999998 23.446999999999996 L23.900000000000002 26.138999999999996 Z" fill="#dadada"/></svg><svg class="s" style="left:26px;top:233px;" width="30" height="28" viewBox="0 0 30 28"><path d="M15.82 12.57 L17.80 12.78 L17.80 15.22 L15.82 15.43 L15.16 17.04 L16.41 18.58 L14.68 20.31 L13.14 19.06 L11.53 19.72 L11.32 21.70 L8.88 21.70 L8.67 19.72 L7.06 19.06 L5.52 20.31 L3.79 18.58 L5.04 17.04 L4.38 15.43 L2.40 15.22 L2.40 12.78 L4.38 12.57 L5.04 10.96 L3.79 9.42 L5.52 7.69 L7.06 8.94 L8.67 8.28 L8.88 6.30 L11.32 6.30 L11.53 8.28 L13.14 8.94 L14.68 7.69 L16.41 9.42 L15.16 10.96 Z" fill="#404040" stroke="#404040" stroke-width="0.6" stroke-linejoin="round"/><circle cx="10.1" cy="14" r="2.9" fill="#dadada"/><path d="M24.43 6.59 L26.02 6.72 L26.02 8.48 L24.43 8.61 L23.84 9.63 L24.52 11.07 L23.00 11.95 L22.09 10.64 L20.91 10.64 L20.00 11.95 L18.48 11.07 L19.16 9.63 L18.57 8.61 L16.98 8.48 L16.98 6.72 L18.57 6.59 L19.16 5.57 L18.48 4.13 L20.00 3.25 L20.91 4.56 L22.09 4.56 L23.00 3.25 L24.52 4.13 L23.84 5.57 Z" fill="#404040" stroke="#404040" stroke-width="0.6" stroke-linejoin="round"/><circle cx="21.5" cy="7.6" r="1.6" fill="#dadada"/><path d="M24.43 19.29 L26.02 19.42 L26.02 21.18 L24.43 21.31 L23.84 22.33 L24.52 23.77 L23.00 24.65 L22.09 23.34 L20.91 23.34 L20.00 24.65 L18.48 23.77 L19.16 22.33 L18.57 21.31 L16.98 21.18 L16.98 19.42 L18.57 19.29 L19.16 18.27 L18.48 16.83 L20.00 15.95 L20.91 17.26 L22.09 17.26 L23.00 15.95 L24.52 16.83 L23.84 18.27 Z" fill="#404040" stroke="#404040" stroke-width="0.6" stroke-linejoin="round"/><circle cx="21.5" cy="20.3" r="1.6" fill="#dadada"/></svg><svg class="s" style="left:26px;top:305px;" width="30" height="26" viewBox="0 0 30 26"><rect x="2.1" y="3" width="24.9" height="17.9" rx="1.6" fill="#404040"/><rect x="4" y="5" width="20.7" height="11.1" fill="#dadada"/><path d="M10.8 20.5 H17.5 L18 23.9 H10.3 Z" fill="#404040"/></svg><svg class="s" style="left:26px;top:380px;" width="30" height="26" viewBox="0 0 30 26"><rect x="2.7" y="19.8" width="3.2" height="3.0" fill="#404040"/><rect x="7.7" y="18" width="3.2" height="4.800000000000001" fill="#404040"/><rect x="12.5" y="14.9" width="3.4000000000000004" height="7.9" fill="#404040"/><rect x="17.5" y="9.8" width="3.3000000000000007" height="13.0" fill="#404040"/><rect x="22.5" y="3.1" width="3.5" height="19.7" fill="#404040"/></svg><svg class="s" style="left:25px;top:450px;" width="30" height="28" viewBox="0 0 30 28"><path d="M7.3 3 H22.9 L26.3 6.7 H4 Z" fill="#222"/><rect x="4.1" y="8.1" width="21.9" height="4.3" rx="0.6" fill="#222"/><rect x="20" y="10" width="5" height="1" fill="#eee"/><rect x="4.1" y="14.4" width="21.9" height="4.3" rx="0.6" fill="#222"/><rect x="11.9" y="16.2" width="13.1" height="1" fill="#eee"/><rect x="4.1" y="21.1" width="21.9" height="4.3" rx="0.6" fill="#222"/><rect x="16.5" y="22.9" width="8.5" height="1" fill="#eee"/></svg><div class="r" style="left:3px;top:430px;width:223px;height:64px;border:5px solid #ff0000;"></div>
<div class="r" style="left:0px;top:0px;width:1350px;height:67px;background:#00aaff;"></div><svg class="s" style="left:0px;top:0px;" width="1350" height="67" viewBox="0 0 1350 67"><g stroke="#ffffff" stroke-opacity="0.07" stroke-width="1.2" fill="none"><path d="M631.6 0 L517.6 67 M636.8 0 L543.5 67 M661 0 L657.5 67 M680.8 0 L750.8 67 M914 0 L647 67 M1040 0 L916.6 67 M1157.4 0 L1172 67 M1246 0 L1350 55"/></g></svg><div class="r" style="left:27px;top:26px;width:25px;height:2px;background:#fff;"></div><div class="r" style="left:27px;top:33px;width:25px;height:2px;background:#fff;"></div><div class="r" style="left:27px;top:40px;width:25px;height:2px;background:#fff;"></div><svg class="s" style="left:70px;top:5px;" width="60" height="60" viewBox="0 0 60 60"><path d="M25.94 10.70 Q27.50 9.80 29.06 10.70 L42.24 18.30 Q43.80 19.20 43.80 21.00 L43.80 36.80 Q43.80 38.60 42.21 39.44 L29.09 46.36 Q27.50 47.20 25.91 46.36 L12.79 39.44 Q11.20 38.60 11.20 36.80 L11.20 21.00 Q11.20 19.20 12.76 18.30 Z" fill="none" stroke="#fff" stroke-width="2.3"/><rect x="18.2" y="21.9" width="18.8" height="9.4" fill="none" stroke="#fff" stroke-width="2"/><rect x="26.6" y="21" width="2" height="10.5" fill="#fff"/><rect x="17.2" y="34.1" width="20.8" height="2.1" fill="#fff"/></svg><svg class="s" style="left:0;top:0" width="300" height="67" viewBox="0 0 300 67"><rect x="126.1" y="25" width="16.90" height="2.70" fill="#fff"/><rect x="133" y="25" width="3.00" height="16.90" fill="#fff"/><rect x="145" y="25" width="2.80" height="16.90" fill="#fff"/><rect x="145" y="25" width="15.70" height="2.70" fill="#fff"/><rect x="145" y="32.1" width="13.00" height="2.70" fill="#fff"/><rect x="145" y="39.2" width="15.70" height="2.70" fill="#fff"/><rect x="163.1" y="25" width="2.80" height="16.90" fill="#fff"/><path d="M163.1 26.35 H176.5 Q178.6 26.35 178.6 28.4 V32 Q178.6 34.05 176.5 34.05 H163.1" fill="none" stroke="#fff" stroke-width="2.7" stroke-linejoin="miter"/><path d="M171.6 35.2 L175.3 35.2 L180.7 41.9 L177 41.9 Z" fill="#fff"/><rect x="183" y="25" width="2.70" height="16.90" fill="#fff"/><rect x="199.5" y="25" width="2.70" height="16.90" fill="#fff"/><path d="M184.2 26 L192.6 35.6 L201 26" fill="none" stroke="#fff" stroke-width="2.6" stroke-linejoin="miter"/><rect x="204.9" y="25" width="2.50" height="16.90" fill="#fff"/><path d="M211.45 26.35 H223.4 Q225.45 26.35 225.45 28.4 V38.5 Q225.45 40.55 223.4 40.55 H211.45 Z" fill="none" stroke="#fff" stroke-width="2.7" stroke-linejoin="miter"/><rect x="230.1" y="25" width="2.70" height="16.90" fill="#fff"/><rect x="230.1" y="25" width="15.50" height="2.70" fill="#fff"/><rect x="230.1" y="32.2" width="12.80" height="2.80" fill="#fff"/><rect x="230.1" y="39.2" width="15.50" height="2.70" fill="#fff"/><path d="M264.8 26.35 H251.4 Q249.35 26.35 249.35 28.4 V31.6 Q249.35 33.6 251.4 33.6 H261.4 Q263.45 33.6 263.45 35.6 V38.5 Q263.45 40.55 261.4 40.55 H251.4 Q249.35 40.55 249.35 38.5 V37.6" fill="none" stroke="#fff" stroke-width="2.7" stroke-linejoin="miter"/><rect x="267.5" y="25" width="2.70" height="16.90" fill="#fff"/><rect x="267.5" y="32.3" width="9.00" height="2.70" fill="#fff"/><path d="M274.4 33.9 L278.4 33.9 L284.4 25 L280.4 25 Z M274.4 33.5 L278.4 33.5 L284.4 41.9 L280.4 41.9 Z" fill="#fff"/></svg><svg class="s" style="left:1000px;top:24px;" width="20" height="20" viewBox="0 0 20 20"><circle cx="10" cy="10" r="8" fill="none" stroke="#fff" stroke-width="2"/><path d="M7 8.2 Q7 5.2 10 5.2 Q13.1 5.2 13.1 7.8 Q13.1 9.4 11.4 10.2 Q10 10.9 10 12.2" fill="none" stroke="#fff" stroke-width="2.4"/><rect x="8.7" y="13.4" width="2.6" height="2.2" fill="#fff"/></svg><svg class="s" style="left:1045px;top:25px;" width="21" height="20" viewBox="0 0 21 20"><circle cx="10.5" cy="9.6" r="8.3" fill="none" stroke="#fff" stroke-width="1.7"/><circle cx="10.5" cy="7.3" r="3.8" fill="#fff"/><path d="M3.6 14.6 Q5 11.3 8.3 11.1 H12.7 Q16 11.3 17.4 14.6 Q14.8 17.9 10.5 17.9 Q6.2 17.9 3.6 14.6 Z" fill="#fff"/></svg><div class="t" style="left:1068.5px;top:28.30px;font-size:15px;line-height:15px;color:#fff;font-weight:400;letter-spacing:-0.06px;">Системный пользователь (admin123)</div><svg class="s" style="left:1328px;top:32px;" width="10" height="9" viewBox="0 0 10 9"><path d="M1.8 2.8 L5.3 6.3 L8.8 2.8" fill="none" stroke="#fff" stroke-width="1.4"/></svg>
</body></html>
